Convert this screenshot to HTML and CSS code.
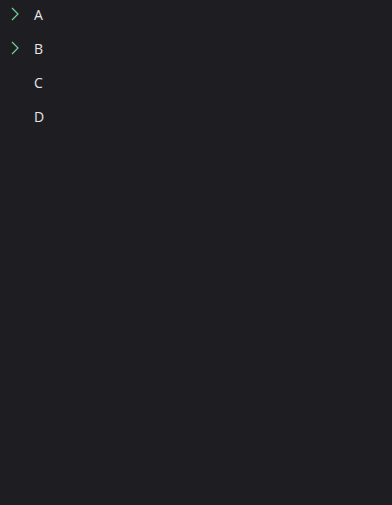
FILE: index.html
```html
<!DOCTYPE html>
<html>
<head>
<meta charset="utf-8">
<link rel="stylesheet" href="styles.css">
</head>
<body>
<ul class="tree">
  <li class="row"><span class="chev"><svg width="8" height="14" viewBox="0 0 8 14"><path d="M1 1 L7 7 L1 13" fill="none" stroke="#6fd49a" stroke-width="1.2"/></svg></span><span class="label">A</span></li>
  <li class="row"><span class="chev"><svg width="8" height="14" viewBox="0 0 8 14"><path d="M1 1 L7 7 L1 13" fill="none" stroke="#6fd49a" stroke-width="1.2"/></svg></span><span class="label">B</span></li>
  <li class="row"><span class="chev"></span><span class="label">C</span></li>
  <li class="row"><span class="chev"></span><span class="label">D</span></li>
</ul>
</body>
</html>
```
FILE: styles.css
```css
html, body {
  margin: 0;
  padding: 0;
  background: #1e1e22;
  height: 100%;
}
.tree {
  list-style: none;
  margin: 0;
  padding: 0;
  display: flex;
  flex-direction: column;
  gap: 4px;
  font-family: "Open Sans", "Noto Sans", sans-serif;
  font-size: 14px;
  color: #e6e6e6;
}
.row {
  box-sizing: border-box;
  display: flex;
  align-items: center;
  height: 30px;
  padding-left: 11px;
  padding-bottom: 2px;
}
.chev {
  width: 23px;
  display: flex;
  align-items: center;
}
.chev svg { display: block; }
```
